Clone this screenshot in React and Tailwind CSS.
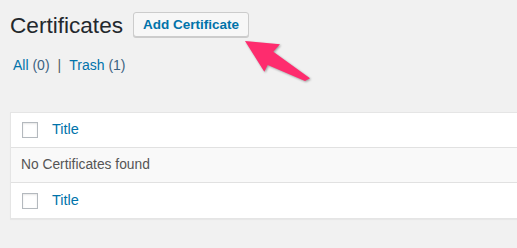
export default function App() {
  return (
    <div className="relative w-[517px] h-[248px] overflow-hidden bg-[#f1f1f1] font-['Liberation_Sans',Arial,sans-serif]">
      <div className="pl-[10px] pt-[12px]">
        <div className="flex items-center h-[25px]">
          <h1 className="text-[22.6px] leading-[25px] pt-[2px] text-[#23282d] font-normal">Certificates</h1>
          <button className="ml-[10px] h-[25px] px-[9px] bg-[#f7f7f7] border border-[#cccccc] rounded-[3px] shadow-[0_1px_0_#cccccc] text-[13.5px] leading-[23px] font-semibold text-[#0073aa]">
            Add Certificate
          </button>
        </div>
        <div className="mt-[19px] pl-[3px] flex items-center h-[18px] text-[14px] leading-[18px] text-[#0073aa]">
          <span>All <span className="text-[#3c6382]">(0)</span></span>
          <span className="mx-[8px] text-[#555d66]">|</span>
          <span>Trash <span className="text-[#3c6382]">(1)</span></span>
        </div>
        <div className="mt-[38px] w-[560px] bg-white border border-[#e5e5e5] shadow-[0_1px_1px_rgba(0,0,0,0.04)]">
          <div className="h-[35px] flex items-center pl-[11px] border-b border-[#e1e1e1]">
            <span className="w-[16px] h-[16px] border border-[#b4b9be] bg-white shadow-[inset_0_1px_2px_rgba(0,0,0,0.1)]"></span>
            <span className="ml-[14px] text-[14.5px] text-[#0073aa]">Title</span>
          </div>
          <div className="h-[35px] flex items-center pl-[10px] bg-[#f9f9f9] border-b border-[#e1e1e1] text-[13.8px] text-[#555555]">
            No Certificates found
          </div>
          <div className="h-[35px] flex items-center pl-[11px]">
            <span className="w-[16px] h-[16px] border border-[#b4b9be] bg-white shadow-[inset_0_1px_2px_rgba(0,0,0,0.1)]"></span>
            <span className="ml-[14px] text-[14.5px] text-[#0073aa]">Title</span>
          </div>
        </div>
      </div>
      <svg className="absolute left-[240px] top-[36px] drop-shadow-[1px_1px_1px_rgba(0,0,0,0.35)]" width="75" height="50" viewBox="0 0 75 50">
        <polygon points="5,5 40,8.3 33.3,15.7 70,42.3 65,45 27.7,29 24.3,35.7" fill="#fe2c6e" />
      </svg>
    </div>
  );
}
